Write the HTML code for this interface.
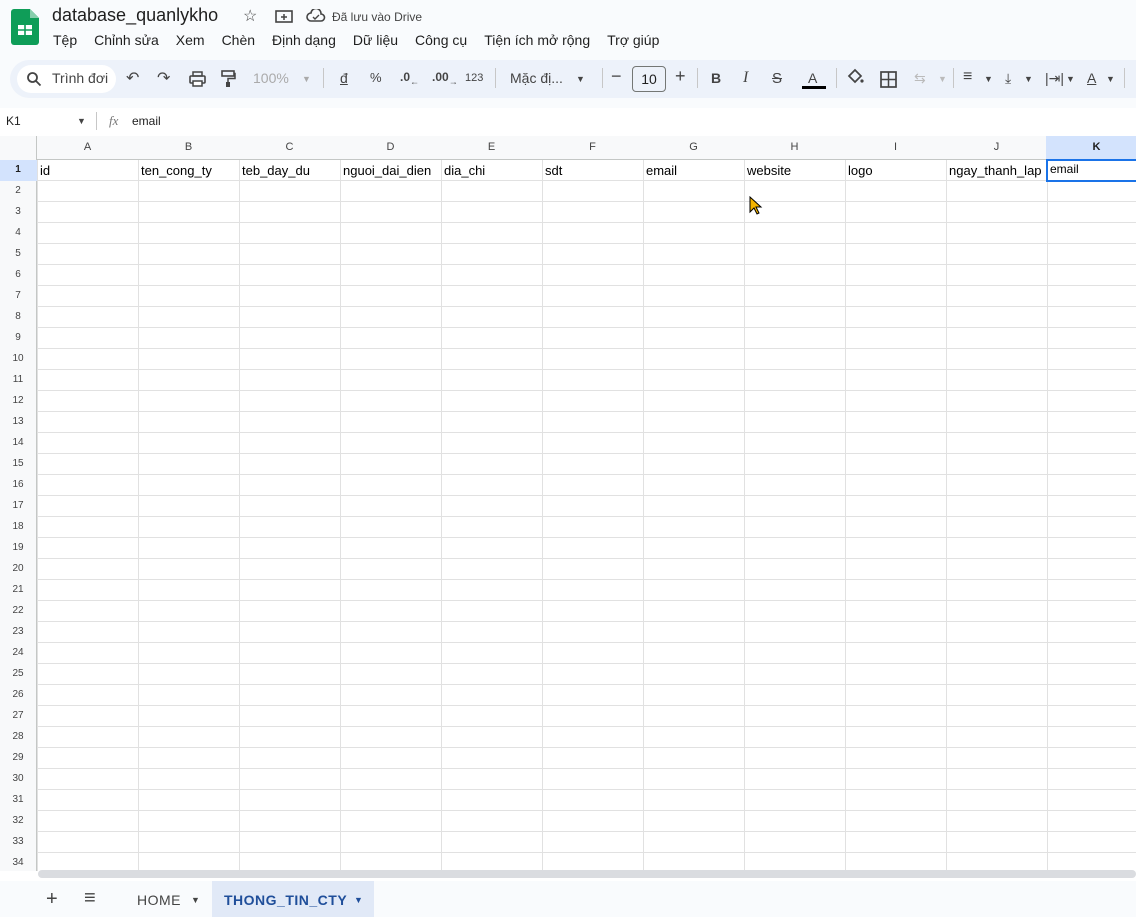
<!DOCTYPE html>
<html><head><meta charset="utf-8"><style>
*{margin:0;padding:0;box-sizing:border-box}
body{width:1136px;height:917px;overflow:hidden;background:#f9fbfd;font-family:"Liberation Sans",Arial,sans-serif;position:relative;color:#1f1f1f}
.a{position:absolute;white-space:nowrap}
.menu span{margin-right:17px}
.tb{position:absolute;top:60px;left:10px;width:1126px;height:38px;background:#edf2fa;border-radius:19px 0 0 19px}
.ic{position:absolute;top:70px;font-size:14px;color:#444}
.sep{position:absolute;top:68px;width:1px;height:20px;background:#c7c7c7}
.grid{position:absolute;left:0;top:136px;width:1136px;height:735px;background:#fff;
background-image:linear-gradient(#e1e1e1 1px,transparent 1px),linear-gradient(90deg,#e1e1e1 1px,transparent 1px);
background-size:101px 21px,101px 21px;background-position:0 23px,37px 0}
.colh{position:absolute;top:136px;left:0;width:1136px;height:24px;background:#f8f9fa;border-bottom:1px solid #c4c7c5}
.rowh{position:absolute;top:136px;left:0;width:37px;height:735px;background:#f8f9fa;border-right:1px solid #c4c7c5}
.ch{position:absolute;top:141px;font-size:11px;color:#444;width:101px;text-align:center}
.rn{position:absolute;left:0;width:36px;text-align:center;font-size:10px;color:#444}
.cell{position:absolute;top:163px;font-size:13px;color:#000}
</style></head><body>
<div class="a" style="left:0;top:0;width:1136px;height:136px;background:#f9fbfd"></div>
<svg class="a" style="left:11px;top:9px" width="28" height="36" viewBox="0 0 28 36"><path d="M3 0h16l9 9v24a3 3 0 0 1-3 3H3a3 3 0 0 1-3-3V3a3 3 0 0 1 3-3z" fill="#0f9d58"/><path d="M19 0v9h9z" fill="#87ceac"/><rect x="7" y="16" width="14" height="10" fill="#fff"/><path d="M7 21h14M14 16v10" stroke="#0f9d58" stroke-width="1.6"/></svg>
<div class="a" style="left:52px;top:5px;font-size:18px;color:#1f1f1f">database_quanlykho</div>
<div class="a" style="left:243px;top:6px;font-size:16px;color:#444">☆</div>
<svg class="a" style="left:275px;top:9px" width="18" height="14"><rect x="1" y="2" width="16" height="11" fill="none" stroke="#444" stroke-width="1.6"/><path d="M9 5v6M6 8h6" stroke="#444" stroke-width="1.5"/></svg>
<svg class="a" style="left:306px;top:9px" width="20" height="14"><path d="M5 12a4 4 0 0 1 0-8 5 5 0 0 1 10 1 3.5 3.5 0 0 1 0 7z" fill="none" stroke="#444" stroke-width="1.6"/><path d="M7 8l2 2 4-4" fill="none" stroke="#444" stroke-width="1.4"/></svg>
<div class="a" style="left:332px;top:10px;font-size:12px;color:#444">Đã lưu vào Drive</div>
<div class="a menu" style="left:53px;top:32px;font-size:14px;color:#1f1f1f"><span>Tệp</span><span>Chỉnh sửa</span><span>Xem</span><span>Chèn</span><span>Định dạng</span><span>Dữ liệu</span><span>Công cụ</span><span>Tiện ích mở rộng</span><span>Trợ giúp</span></div>
<div class="tb"></div>
<div class="a" style="left:17px;top:65px;width:99px;height:28px;background:#fff;border-radius:14px"></div>
<svg class="a" style="left:26px;top:71px" width="16" height="16"><circle cx="6.5" cy="6.5" r="4.5" fill="none" stroke="#444" stroke-width="1.8"/><path d="M10 10l4.5 4.5" stroke="#444" stroke-width="1.8"/></svg>
<div class="ic" style="left:52px">Trình đơi</div>
<div class="ic" style="left:126px;font-size:16px;top:68px">↶</div>
<div class="ic" style="left:157px;font-size:16px;top:68px">↷</div>
<svg class="a" style="left:189px;top:71px" width="17" height="16"><rect x="4" y="1" width="9" height="4" fill="none" stroke="#444" stroke-width="1.5"/><rect x="1" y="5" width="15" height="7" rx="1" fill="none" stroke="#444" stroke-width="1.6"/><rect x="4" y="10" width="9" height="5" fill="#fff" stroke="#444" stroke-width="1.5"/></svg>
<svg class="a" style="left:220px;top:70px" width="16" height="18"><rect x="2" y="1" width="12" height="5" fill="none" stroke="#444" stroke-width="1.6"/><path d="M14 3.5h1v5H8v4" fill="none" stroke="#444" stroke-width="1.5"/><rect x="6" y="12" width="4" height="5" fill="#444"/></svg>
<div class="ic" style="left:253px;color:#aaa">100%</div><div class="ic" style="left:302px;color:#aaa;font-size:9px;top:74px">▼</div>
<div class="sep" style="left:323px"></div>
<div class="ic" style="left:340px;text-decoration:underline">đ</div>
<div class="ic" style="left:370px;font-size:13px">%</div>
<div class="ic" style="left:400px;font-size:12px;font-weight:bold">.0<sub style="font-size:9px">←</sub></div>
<div class="ic" style="left:432px;font-size:12px;font-weight:bold">.00<sub style="font-size:9px">→</sub></div>
<div class="ic" style="left:465px;font-size:11px;top:72px">123</div>
<div class="sep" style="left:495px"></div>
<div class="ic" style="left:510px">Mặc đị...</div><div class="ic" style="left:576px;font-size:9px;top:74px">▼</div>
<div class="sep" style="left:602px"></div>
<div class="ic" style="left:611px;font-size:18px;top:66px">−</div>
<div class="a" style="left:632px;top:66px;width:34px;height:26px;border:1px solid #747775;border-radius:4px;font-size:14px;text-align:center;line-height:24px">10</div>
<div class="ic" style="left:675px;font-size:18px;top:66px">+</div>
<div class="sep" style="left:697px"></div>
<div class="ic" style="left:711px;font-weight:bold">B</div>
<div class="ic" style="left:743px;font-style:italic;font-family:'Liberation Serif';font-size:16px;top:69px">I</div>
<div class="ic" style="left:772px;text-decoration:line-through;font-size:15px">S</div>
<div class="ic" style="left:808px">A</div><div class="a" style="left:802px;top:86px;width:24px;height:3px;background:#000"></div>
<div class="sep" style="left:836px"></div>
<svg class="a" style="left:845px;top:68px" width="20" height="20"><path d="M4 8l6-6 6 6-6 6z" fill="none" stroke="#444" stroke-width="1.7"/><circle cx="17" cy="13" r="1.6" fill="#444"/></svg>
<svg class="a" style="left:880px;top:71px" width="17" height="17"><rect x="1" y="1" width="15" height="15" fill="none" stroke="#444" stroke-width="1.7"/><path d="M8.5 1v15M1 8.5h15" stroke="#444" stroke-width="1.5"/></svg>
<div class="ic" style="left:914px;color:#bbb">⇆</div><div class="ic" style="left:938px;color:#bbb;font-size:9px;top:74px">▼</div>
<div class="sep" style="left:953px"></div>
<div class="ic" style="left:963px;font-size:16px;top:68px">≡</div><div class="ic" style="left:984px;font-size:9px;top:74px">▼</div>
<div class="ic" style="left:1005px">⤓</div><div class="ic" style="left:1024px;font-size:9px;top:74px">▼</div>
<div class="ic" style="left:1045px">|⇥|</div><div class="ic" style="left:1066px;font-size:9px;top:74px">▼</div>
<div class="ic" style="left:1087px;text-decoration:underline">A</div><div class="ic" style="left:1106px;font-size:9px;top:74px">▼</div>
<div class="sep" style="left:1124px"></div>
<div class="a" style="left:0;top:108px;width:1136px;height:28px;background:#fff"></div>
<div class="a" style="left:6px;top:114px;font-size:12px">K1</div>
<div class="a" style="left:77px;top:116px;font-size:9px;color:#444">▼</div>
<div class="a" style="left:96px;top:112px;width:1px;height:18px;background:#c7c7c7"></div>
<div class="a" style="left:109px;top:113px;font-size:13px;font-style:italic;color:#777;font-family:'Liberation Serif'">fx</div>
<div class="a" style="left:132px;top:114px;font-size:12px">email</div>
<div class="grid"></div>
<div class="colh"></div>
<div class="a" style="left:1046px;top:136px;width:90px;height:24px;background:#d3e3fd"></div>
<div class="rowh"></div>
<div class="a" style="left:0;top:160px;width:37px;height:21px;background:#d3e3fd"></div>
<div class="ch" style="left:37px">A</div><div class="ch" style="left:138px">B</div><div class="ch" style="left:239px">C</div><div class="ch" style="left:340px">D</div><div class="ch" style="left:441px">E</div><div class="ch" style="left:542px">F</div><div class="ch" style="left:643px">G</div><div class="ch" style="left:744px">H</div><div class="ch" style="left:845px">I</div><div class="ch" style="left:946px">J</div><div class="ch" style="left:1046px;font-weight:bold;color:#1f1f1f">K</div>
<div id="rows"></div>
<div class="cell" style="left:40px">id</div>
<div class="cell" style="left:141px">ten_cong_ty</div>
<div class="cell" style="left:242px">teb_day_du</div>
<div class="cell" style="left:343px">nguoi_dai_dien</div>
<div class="cell" style="left:444px">dia_chi</div>
<div class="cell" style="left:545px">sdt</div>
<div class="cell" style="left:646px">email</div>
<div class="cell" style="left:747px">website</div>
<div class="cell" style="left:848px">logo</div>
<div class="cell" style="left:949px">ngay_thanh_lap</div>
<div class="a" style="left:1046px;top:159px;width:92px;height:23px;border:2px solid #1a73e8;background:#fff"></div>
<div class="cell" style="left:1050px;top:162px;font-size:12px">email</div>
<svg class="a" style="left:749px;top:196px" width="14" height="20"><path d="M1 1v15l4-4 3 6 2-1-3-6h5z" fill="#f4b400" stroke="#000" stroke-width="1"/></svg>
<div class="a" style="left:0;top:871px;width:1136px;height:10px;background:#fff"></div>
<div class="a" style="left:38px;top:870px;width:1098px;height:8px;background:#dadce0;border-radius:4px"></div>
<div class="a" style="left:0;top:881px;width:1136px;height:36px;background:#f9fbfd"></div>
<div class="a" style="left:46px;top:888px;font-size:20px;color:#444">+</div>
<div class="a" style="left:84px;top:887px;font-size:20px;color:#444">≡</div>
<div class="a" style="left:137px;top:892px;font-size:14px;color:#444;letter-spacing:.5px">HOME</div>
<div class="a" style="left:191px;top:895px;font-size:9px;color:#444">▼</div>
<div class="a" style="left:212px;top:881px;width:162px;height:36px;background:#e1e9f7"></div>
<div class="a" style="left:224px;top:892px;font-size:14px;color:#1f4e9a;font-weight:bold;letter-spacing:.5px">THONG_TIN_CTY</div>
<div class="a" style="left:354px;top:895px;font-size:9px;color:#1f4e9a">▼</div>
<script>
var h='';for(var i=1;i<=34;i++){h+='<div class="rn" style="top:'+(160+(i-1)*21+4)+'px'+(i==1?';font-weight:bold;color:#1f1f1f':'')+'">'+i+'</div>';}
document.getElementById('rows').outerHTML=h;
</script>
</body></html>
